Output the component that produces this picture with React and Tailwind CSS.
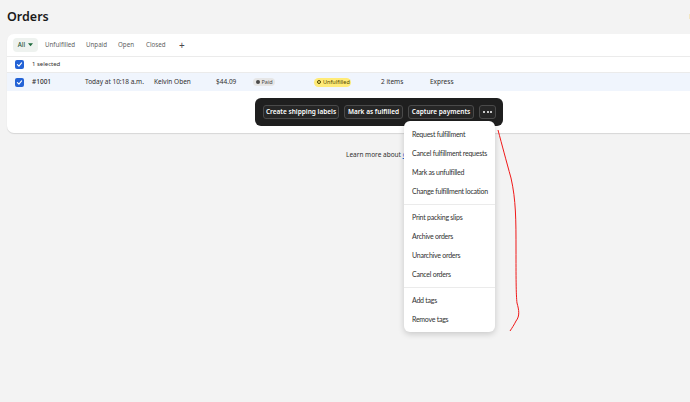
import React from "react";

function Check() {
  return (
    <span className="flex h-[9px] w-[9px] items-center justify-center rounded-[2px] bg-[#2463d6]">
      <svg width="7" height="7" viewBox="0 0 10 10">
        <path d="M2 5.2 L4.2 7.3 L8 2.8" stroke="white" strokeWidth="1.6" fill="none" strokeLinecap="round" strokeLinejoin="round" />
      </svg>
    </span>
  );
}

const menu = [
  ["Request fulfillment", "Cancel fulfillment requests", "Mark as unfulfilled", "Change fulfillment location"],
  ["Print packing slips", "Archive orders", "Unarchive orders", "Cancel orders"],
  ["Add tags", "Remove tags"],
];

export default function App() {
  return (
    <div
      className="relative h-[402px] w-[690px] overflow-hidden bg-[#f3f3f3] text-[#303030]"
      style={{ fontFamily: '"Noto Sans", "Open Sans", sans-serif' }}
    >
      <div className="w-[712px]">
        <div className="flex h-[34px] items-center justify-between pl-[7px] pr-[2px]">
          <span className="text-[12.5px] font-semibold leading-none text-[#1a1a1a]">Orders</span>
          <span className="text-[6.5px] font-medium text-[#303030]">Export</span>
        </div>
        <div className="ml-[7px] h-[99px] rounded-tl-[7px] rounded-bl-[7px] bg-white shadow-[0_1px_1px_rgba(0,0,0,0.12)]">
          <div className="flex h-[23px] items-center border-b border-[#ebebeb] pl-[6px] text-[6.2px] text-[#616161]">
            <span className="flex h-[14px] w-[25px] items-center justify-center gap-[3px] rounded-[4px] bg-[#eef2ef] font-medium text-[#29593b]">
              All
              <svg width="5" height="4" viewBox="0 0 6 4">
                <path d="M0 0 L6 0 L3 3.5 Z" fill="#1f6b3d" />
              </svg>
            </span>
            <span className="ml-[7px] w-[41px]">Unfulfilled</span>
            <span className="w-[32px]">Unpaid</span>
            <span className="w-[28px]">Open</span>
            <span className="w-[33px]">Closed</span>
            <span className="text-[10px] leading-none text-[#4a4a4a]">+</span>
          </div>
          <div className="flex h-[16px] items-center border-b border-[#ebebeb] pl-[8px] text-[6px] text-[#303030]">
            <Check />
            <span className="ml-[8px]">1 selected</span>
          </div>
          <div className="flex h-[18px] items-center bg-[#f0f5fd] pl-[8px] text-[6.5px] text-[#303030]">
            <Check />
            <span className="ml-[8px] w-[53px] font-medium">#1001</span>
            <span className="w-[69px]">Today at 10:18 a.m.</span>
            <span className="w-[62px]">Kelvin Oben</span>
            <span className="w-[37px]">$44.09</span>
            <span className="flex h-[8px] w-[22px] items-center gap-[2px] rounded-full bg-[#e6e6e6] pl-[3px] text-[5.5px] text-[#4a4a4a]">
              <span className="h-[3.5px] w-[3.5px] rounded-full bg-[#4a4a4a]" />
              Paid
            </span>
            <span className="ml-[39px] flex h-[9px] w-[37px] items-center gap-[2px] rounded-full bg-[#ffeb78] pl-[3px] text-[5.5px] text-[#4f4700]">
              <span className="h-[4px] w-[4px] rounded-full border border-[#4f4700]" />
              Unfulfilled
            </span>
            <span className="ml-[30px] w-[49px]">2 items</span>
            <span>Express</span>
          </div>
        </div>
        <div className="mt-[17px] pl-[346px] text-[6.5px] text-[#303030]">
          Learn more about <span className="text-[#2463d6] underline">orders</span>
        </div>
      </div>

      {/* floating bulk action bar */}
      <div className="absolute left-[255px] top-[98px] flex h-[28px] w-[248px] items-center gap-[5px] rounded-[6px] bg-[#1f1f1f] pl-[8px] text-[6.5px] font-semibold text-white">
        <span className="flex h-[14px] w-[76px] items-center justify-center rounded-[3px] border border-[#4a4a4a] bg-[#262626]">Create shipping labels</span>
        <span className="flex h-[14px] w-[59px] items-center justify-center rounded-[3px] border border-[#4a4a4a] bg-[#262626]">Mark as fulfilled</span>
        <span className="flex h-[14px] w-[66px] items-center justify-center rounded-[3px] border border-[#4a4a4a] bg-[#262626]">Capture payments</span>
        <span className="flex h-[14px] w-[17px] items-center justify-center gap-[1.5px] rounded-[3px] border border-[#4a4a4a] bg-[#262626]">
          <span className="h-[2px] w-[2px] rounded-full bg-white" />
          <span className="h-[2px] w-[2px] rounded-full bg-white" />
          <span className="h-[2px] w-[2px] rounded-full bg-white" />
        </span>
      </div>

      {/* dropdown menu */}
      <div
        className="absolute left-[404px] top-[121px] w-[91px] rounded-[6px] bg-white py-[0.5px] text-[7px] tracking-[-0.25px] text-[#303030] shadow-[0_2px_6px_rgba(0,0,0,0.18)]"
        style={{ fontFamily: 'Lato, "Noto Sans", sans-serif' }}
      >
        {menu.map((group, gi) => (
          <div key={gi} className={gi > 0 ? "border-t border-[#ebebeb] py-[3px]" : "py-[3px]"}>
            {group.map((item) => (
              <div key={item} className="flex h-[19px] items-center whitespace-nowrap px-[8px]">
                {item}
              </div>
            ))}
          </div>
        ))}
      </div>

      {/* hand-drawn red annotation */}
      <svg className="pointer-events-none absolute left-0 top-0" width="690" height="402" viewBox="0 0 690 402">
        <path
          d="M498 130 C502 145 506 160 511 178 C516 200 516 220 516 250 C516 275 516 295 517 303 C519 310 520 316 516 321 C514 325 512 328 510 331"
          stroke="#f01818"
          strokeWidth="1"
          fill="none"
        />
      </svg>
    </div>
  );
}
